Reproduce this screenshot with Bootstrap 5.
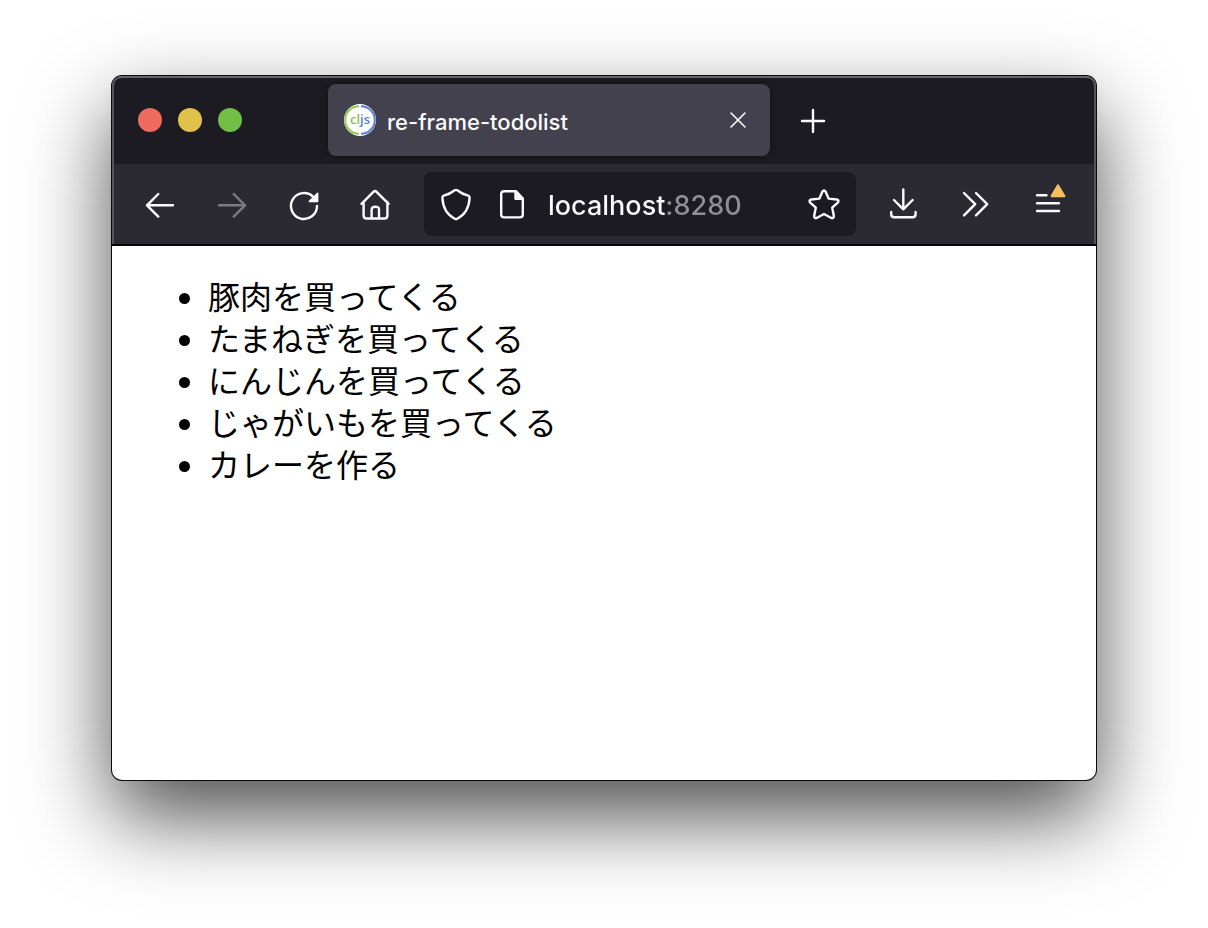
<!DOCTYPE html>
<html lang="ja">
<head>
<meta charset="utf-8">
<meta name="viewport" content="width=device-width, initial-scale=1">
<title>re-frame-todolist</title>
<link rel="stylesheet" href="https://cdn.jsdelivr.net/npm/bootstrap@5.3.0/dist/css/bootstrap.min.css">
<style>
  .desktop { min-height: 100vh; padding: 76px 112px 148px; background: #fff; }
  .browser {
    background: #fff; border-radius: 10px; font-family: Inter, "Liberation Sans", sans-serif;
    box-shadow: 0 0 0 1px #0b0b0c, 0 36px 84px rgba(0, 0, 0, .7);
  }
  .chrome-top { background: #1c1b22; border-bottom: 2px solid #060608; border-radius: 10px 10px 0 0; overflow: hidden; box-shadow: inset 2px 0 #56555b, inset -2px 0 #56555b, inset 0 2px #66656a; }
  .tabstrip { height: 88px; padding-left: 26px; }
  .light { width: 24px; height: 24px; padding: 0; border: 0; border-radius: 50%; }
  .light-close { background: #ee6a5f; }
  .light-min { background: #e1c14c; }
  .light-max { background: #71bf47; }
  .tab { flex: 0 1 442px; height: 72px; margin-left: 86px; padding: 0 16px; border-radius: 8px; background: #42414d; color: #fbfbfe; box-shadow: 0 0 6px rgba(0, 0, 0, .4); }
  .tab-title { font-size: 22px; font-weight: 500; line-height: 28px; margin: 4px 0 0 11px; color: #fbfbfe; }
  .toolbar { height: 80px; padding: 0 10px; margin: 0 2px; background: #2b2a33; }
  .icon-btn { display: flex; align-items: center; justify-content: center; padding: 0; border: 0; background: none; color: #fbfbfe; }
  .icon-btn:disabled { color: #7b7a80; }
  .tool { flex: 0 0 72px; height: 72px; }
  .icon-btn svg { width: 32px; height: 32px; fill: none; stroke: currentColor; stroke-width: 2.4; stroke-linecap: round; stroke-linejoin: round; overflow: visible; }
  .icon-btn .thin { stroke-width: 1.6; }
  .urlbar { height: 64px; margin: 0 12px; padding: 0 16px; border-radius: 8px; background: #1c1b22; }
  .url-input {
    width: 100%; min-width: 0; margin-left: 20px; padding: 4px 0 0; border: 0; outline: 0; font-size: 27px; font-weight: 500; line-height: 40px;
    color: #fbfbfe; -webkit-text-fill-color: transparent;
    background: linear-gradient(to right, #fbfbfe 117px, #8f8f96 117px); -webkit-background-clip: text; background-clip: text;
  }
  .page-body { min-height: 534px; padding: 28px 16px 16px; border-radius: 0 0 10px 10px; color: #000; }
  .todos { margin: 0; padding-left: 80px; font: 400 32px/42px "Noto Sans CJK JP", serif; }
  .todos li::marker { font-size: 29px; }
</style>
</head>
<body>
<div class="desktop d-flex flex-column">
  <main class="browser flex-grow-1 d-flex flex-column">
    <header class="chrome-top">
      <div class="tabstrip d-flex align-items-center">
        <div class="d-flex gap-3">
          <button class="light light-close" aria-label="Close window"></button>
          <button class="light light-min" aria-label="Minimize"></button>
          <button class="light light-max" aria-label="Zoom"></button>
        </div>
        <div class="tab d-flex align-items-center">
          <svg width="32" height="32" viewBox="0 0 32 32" aria-hidden="true">
            <circle cx="16" cy="16" r="16" fill="#fff"/>
            <path d="M15 2.2A13.8 13.8 0 0 0 15 29.8" fill="none" stroke="#96ca4b" stroke-width="2"/>
            <path d="M17 2.2A13.8 13.8 0 0 1 17 29.8" fill="none" stroke="#5b7fd0" stroke-width="2"/>
            <text x="6" y="20" font-family="Open Sans, sans-serif" font-size="13" font-weight="600" fill="#8cbf4a">cl<tspan fill="#5b7fd0">js</tspan></text>
          </svg>
          <span class="tab-title flex-grow-1 text-truncate">re-frame-todolist</span>
          <button class="icon-btn" aria-label="Close tab"><svg viewBox="0 0 32 32"><path class="thin" d="M9 9L23 23M23 9L9 23"/></svg></button>
        </div>
        <button class="icon-btn ms-4" aria-label="New tab"><svg viewBox="0 0 32 32"><path d="M19 6V28M8 17H30"/></svg></button>
      </div>
      <nav class="toolbar d-flex align-items-center">
        <button class="icon-btn tool" aria-label="Back"><svg viewBox="0 0 32 32"><path d="M29 17.3H3M14.3 6L3 17.3L14.3 28.6"/></svg></button>
        <button class="icon-btn tool" aria-label="Forward" disabled><svg viewBox="0 0 32 32"><path d="M3 17.3H29M17.7 6L29 17.3L17.7 28.6"/></svg></button>
        <button class="icon-btn tool" aria-label="Reload"><svg viewBox="0 0 32 32"><path d="M29 18A13 13 0 1 1 25.2 8.8"/><path class="thin" d="M29.6 5.4V13.4H21.4Z" fill="currentColor"/></svg></button>
        <button class="icon-btn tool" aria-label="Home"><svg viewBox="0 0 32 32"><path d="M1.5 15.8L13.4 3.8Q15 2.2 16.6 3.8L28.6 15.8M3.6 14V27.5Q3.6 30.5 6.6 30.5H24.4Q27.4 30.5 27.4 27.5V14M11.6 30V21.5Q11.6 18.7 15.4 18.7T19 21.5V30"/></svg></button>
        <div class="urlbar flex-grow-1 d-flex align-items-center">
          <button class="icon-btn me-4" aria-label="Tracking protection"><svg viewBox="0 0 32 32"><path d="M14.7 2.2Q16 1.5 17.3 2.2C20.5 4.8 24.5 6.7 28.2 7.7Q29.7 8.2 29.6 9.8C29.2 19 26.2 26.2 17.3 30.7Q16 31.4 14.7 30.7C5.8 26.2 2.8 19 2.4 9.8Q2.3 8.2 3.8 7.7C7.5 6.7 11.5 4.8 14.7 2.2Z"/></svg></button>
          <button class="icon-btn" aria-label="Site information"><svg viewBox="0 0 32 32"><path d="M20 3.3H8Q5.2 3.3 5.2 6.2V26.6Q5.2 29.4 8 29.4H24Q26.8 29.4 26.8 26.6V10.5Z"/><path d="M19.5 3.3V10.8H26.8Z" fill="currentColor"/></svg></button>
          <input class="url-input" type="text" value="localhost:8280" aria-label="Address" spellcheck="false">
          <button class="icon-btn" aria-label="Bookmark this page"><svg viewBox="0 0 32 32"><path d="M14.3 3.7Q16 1.3 17.7 3.7L20.6 10.6L28.8 11.5Q31.6 12.3 29.8 14.7L24.2 19.6L25.8 27.7Q25.9 30.7 23.3 30L16 26L8.7 30Q6.1 30.7 6.2 27.7L7.8 19.6L2.2 14.7Q.4 12.3 3.2 11.5L11.4 10.6Z"/></svg></button>
        </div>
        <button class="icon-btn tool" aria-label="Downloads"><svg viewBox="0 0 32 32"><path d="M15.3 1.5V21M6 12L15.3 21.3L24.6 12M3.2 24V26.2Q3.2 29.2 6.2 29.2H24.6Q27.6 29.2 27.6 26.2V24"/></svg></button>
        <button class="icon-btn tool" aria-label="More tools"><svg viewBox="0 0 32 32"><path d="M4 5L15.2 16.2L4 27.4M16 5L27.2 16.2L16 27.4"/></svg></button>
        <button class="icon-btn tool" aria-label="Menu"><svg viewBox="0 0 32 32"><path d="M5 7.3H14.5M5 15.2H27M5 23H27"/><path d="M26 -2.5L32.2 8H19.8Z" fill="#f7bf60" stroke="#f7bf60"/></svg></button>
      </nav>
    </header>
    <section class="page-body flex-grow-1">
      <ul class="todos">
        <li>豚肉を買ってくる</li>
        <li>たまねぎを買ってくる</li>
        <li>にんじんを買ってくる</li>
        <li>じゃがいもを買ってくる</li>
        <li>カレーを作る</li>
      </ul>
    </section>
  </main>
</div>
<script src="https://cdn.jsdelivr.net/npm/bootstrap@5.3.0/dist/js/bootstrap.bundle.min.js"></script>
</body>
</html>
